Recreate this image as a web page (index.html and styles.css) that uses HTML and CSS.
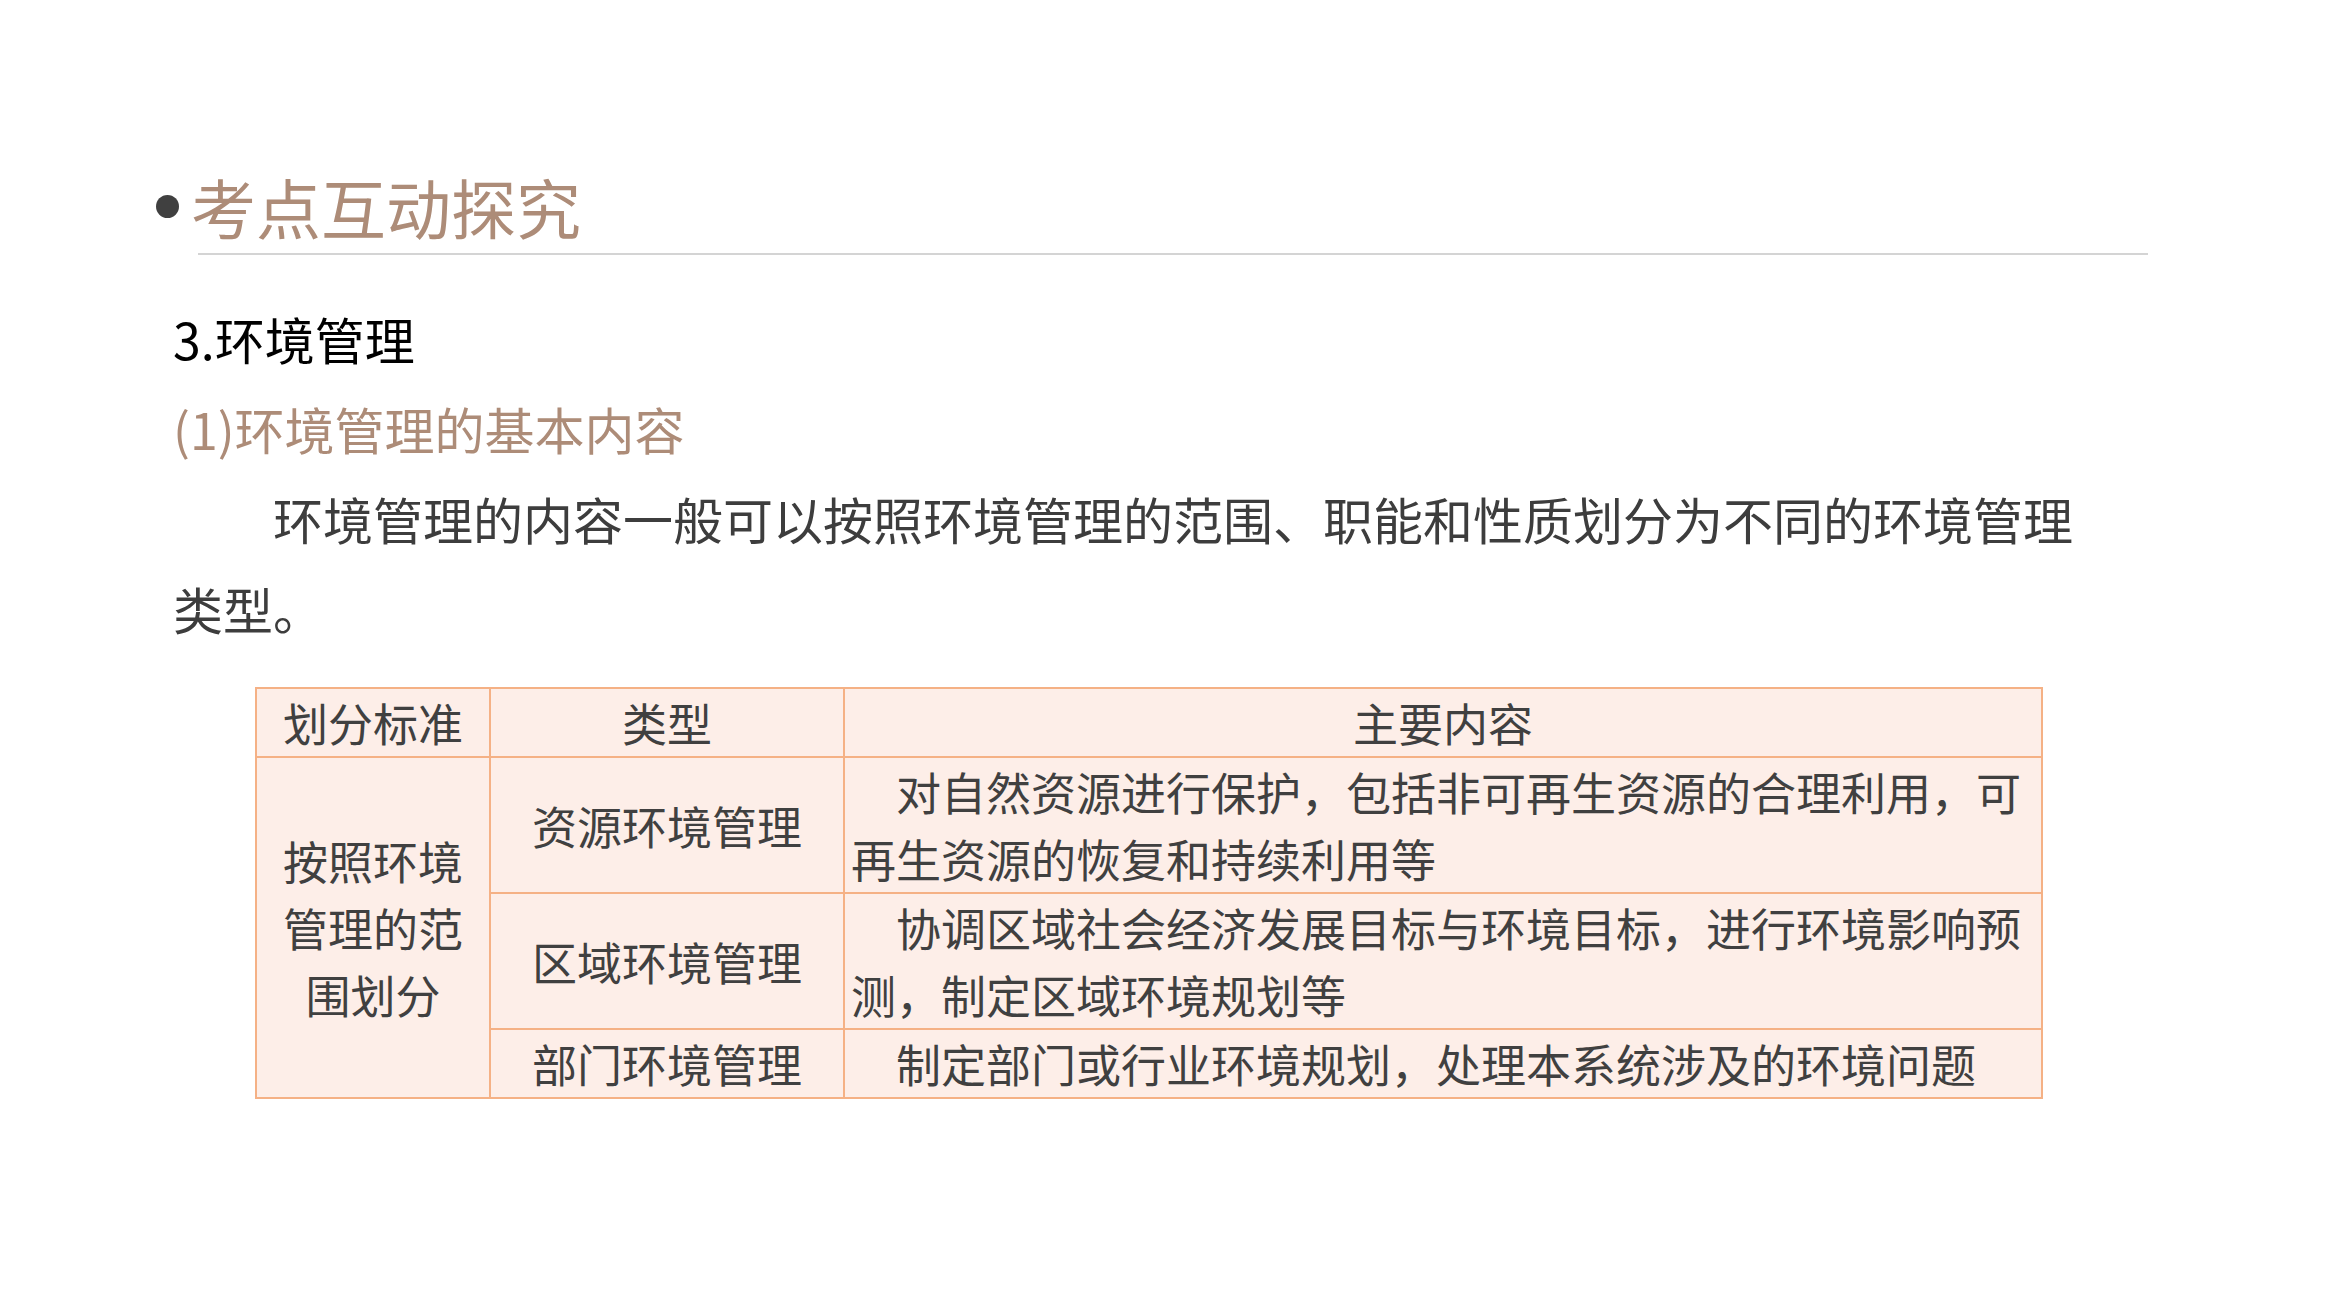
FILE: index.html
```html
<!DOCTYPE html>
<html lang="zh-CN">
<head>
<meta charset="utf-8">
<title>考点互动探究</title>
<link rel="stylesheet" href="styles.css">
</head>
<body>
<div class="page">
  <header class="title-row">
    <span class="dot"></span>
    <h1 class="title">考点互动探究</h1>
  </header>
  <div class="rule"></div>
  <section class="content">
    <h2 class="sec">3.环境管理</h2>
    <h3 class="sub">(1)环境管理的基本内容</h3>
    <p class="para">环境管理的内容一般可以按照环境管理的范围、职能和性质划分为不同的环境管理类型。</p>
    <table class="grid">
      <colgroup>
        <col class="c1">
        <col class="c2">
        <col class="c3">
      </colgroup>
      <thead>
        <tr>
          <th>划分标准</th>
          <th>类型</th>
          <th>主要内容</th>
        </tr>
      </thead>
      <tbody>
        <tr>
          <td class="crit" rowspan="3">按照环境管理的范围划分</td>
          <td class="type">资源环境管理</td>
          <td class="desc">对自然资源进行保护，包括非可再生资源的合理利用，可再生资源的恢复和持续利用等</td>
        </tr>
        <tr>
          <td class="type">区域环境管理</td>
          <td class="desc">协调区域社会经济发展目标与环境目标，进行环境影响预测，制定区域环境规划等</td>
        </tr>
        <tr>
          <td class="type">部门环境管理</td>
          <td class="desc">制定部门或行业环境规划，处理本系统涉及的环境问题</td>
        </tr>
      </tbody>
    </table>
  </section>
</div>
</body>
</html>
```
FILE: styles.css
```css
html, body {
  margin: 0;
  padding: 0;
  background: #ffffff;
}
body {
  font-family: "Noto Sans CJK SC", "Noto Sans", sans-serif;
  color: #3d3d3d;
}
.page {
  width: 2339px;
  height: 1311px;
  padding-top: 166px;
  box-sizing: border-box;
}
.title-row {
  display: flex;
  align-items: center;
  height: 80px;
  margin-left: 156px;
  gap: 12px;
}
.dot {
  width: 23px;
  height: 23px;
  border-radius: 50%;
  background: #404040;
  flex: none;
}
.title {
  margin: 0;
  font-size: 65px;
  font-weight: 400;
  line-height: 80px;
  color: #ad8c78;
}
.rule {
  margin: 7px 0 0 198px;
  width: 1950px;
  height: 2px;
  background: #d4d4d4;
}
.content {
  margin-top: 38px;
  padding-left: 173px;
  width: 2000px;
}
.sec, .sub, .para {
  margin: 0;
  font-size: 50px;
  font-weight: 400;
  line-height: 90px;
}
.sec {
  color: #000000;
}
.sub {
  color: #ad8c78;
}
.para {
  text-indent: 100px;
  width: 1925px;
  color: #3d3d3d;
}
.grid {
  margin: 34px 0 0 82px;
  border-collapse: collapse;
  width: 1786px;
  table-layout: fixed;
  background: #fdeee8;
  font-size: 45px;
  line-height: 67px;
  color: #404040;
}
.c1 { width: 234px; }
.c2 { width: 354px; }
.c3 { width: 1198px; }
.grid th,
.grid td {
  border: 2px solid #f5b185;
  padding: 0 6px;
  font-weight: 400;
  vertical-align: middle;
}
.grid th,
.crit,
.type {
  text-align: center;
}
.desc {
  text-align: left;
  text-indent: 45px;
}
```
